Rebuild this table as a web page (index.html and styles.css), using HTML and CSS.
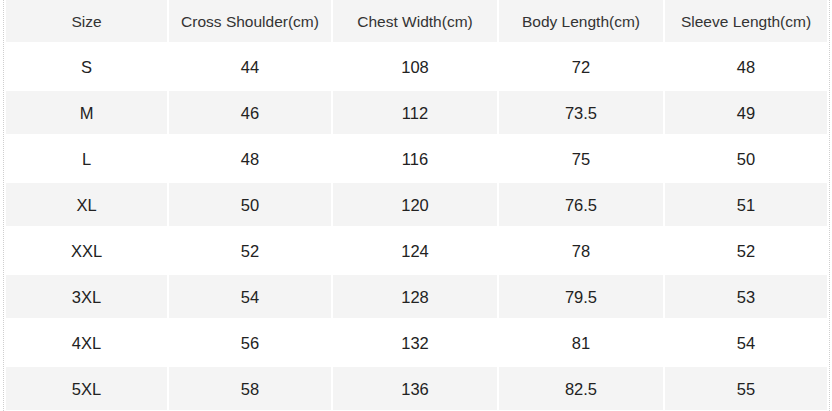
FILE: index.html
```html
<!DOCTYPE html>
<html>
<head>
<meta charset="utf-8">
<link rel="stylesheet" href="styles.css">
</head>
<body>
<div class="wrap">
<table class="sizes">
<colgroup>
<col class="c1"><col class="c2"><col class="c3"><col class="c4"><col class="c5">
</colgroup>
<thead>
<tr><th>Size</th><th>Cross Shoulder(cm)</th><th>Chest Width(cm)</th><th>Body Length(cm)</th><th>Sleeve Length(cm)</th></tr>
</thead>
<tbody>
<tr><td>S</td><td>44</td><td>108</td><td>72</td><td>48</td></tr>
<tr class="alt"><td>M</td><td>46</td><td>112</td><td>73.5</td><td>49</td></tr>
<tr><td>L</td><td>48</td><td>116</td><td>75</td><td>50</td></tr>
<tr class="alt"><td>XL</td><td>50</td><td>120</td><td>76.5</td><td>51</td></tr>
<tr><td>XXL</td><td>52</td><td>124</td><td>78</td><td>52</td></tr>
<tr class="alt"><td>3XL</td><td>54</td><td>128</td><td>79.5</td><td>53</td></tr>
<tr><td>4XL</td><td>56</td><td>132</td><td>81</td><td>54</td></tr>
<tr class="alt"><td>5XL</td><td>58</td><td>136</td><td>82.5</td><td>55</td></tr>
</tbody>
</table>
</div>
</body>
</html>
```
FILE: styles.css
```css
html, body {
  margin: 0;
  padding: 0;
  background: #fff;
}
body {
  width: 832px;
  height: 411px;
  overflow: hidden;
  font-family: "Liberation Sans", Arial, sans-serif;
}
.wrap {
  margin-left: 3px;
  width: 825px;
  border-left: 1px dotted #cfcfcf;
  border-right: 1px dotted #cfcfcf;
  overflow: hidden;
}
.sizes {
  width: 825px;
  table-layout: fixed;
  border-collapse: separate;
  border-spacing: 2px 3px;
  margin-top: -3px;
  font-size: 16.5px;
  color: #222;
}
.c1 { width: 161px; }
.c2 { width: 162px; }
.c3 { width: 164px; }
.c4 { width: 164px; }
.c5 { width: 162px; }
.sizes th,
.sizes td {
  padding: 2px 0 0;
  text-align: center;
  vertical-align: middle;
  font-weight: normal;
}
.sizes th {
  height: 40px;
  background: #f4f4f4;
  color: #333;
  font-size: 15.5px;
}
.sizes td {
  height: 41px;
}
.sizes tr.alt td {
  background: #f4f4f4;
}
```
